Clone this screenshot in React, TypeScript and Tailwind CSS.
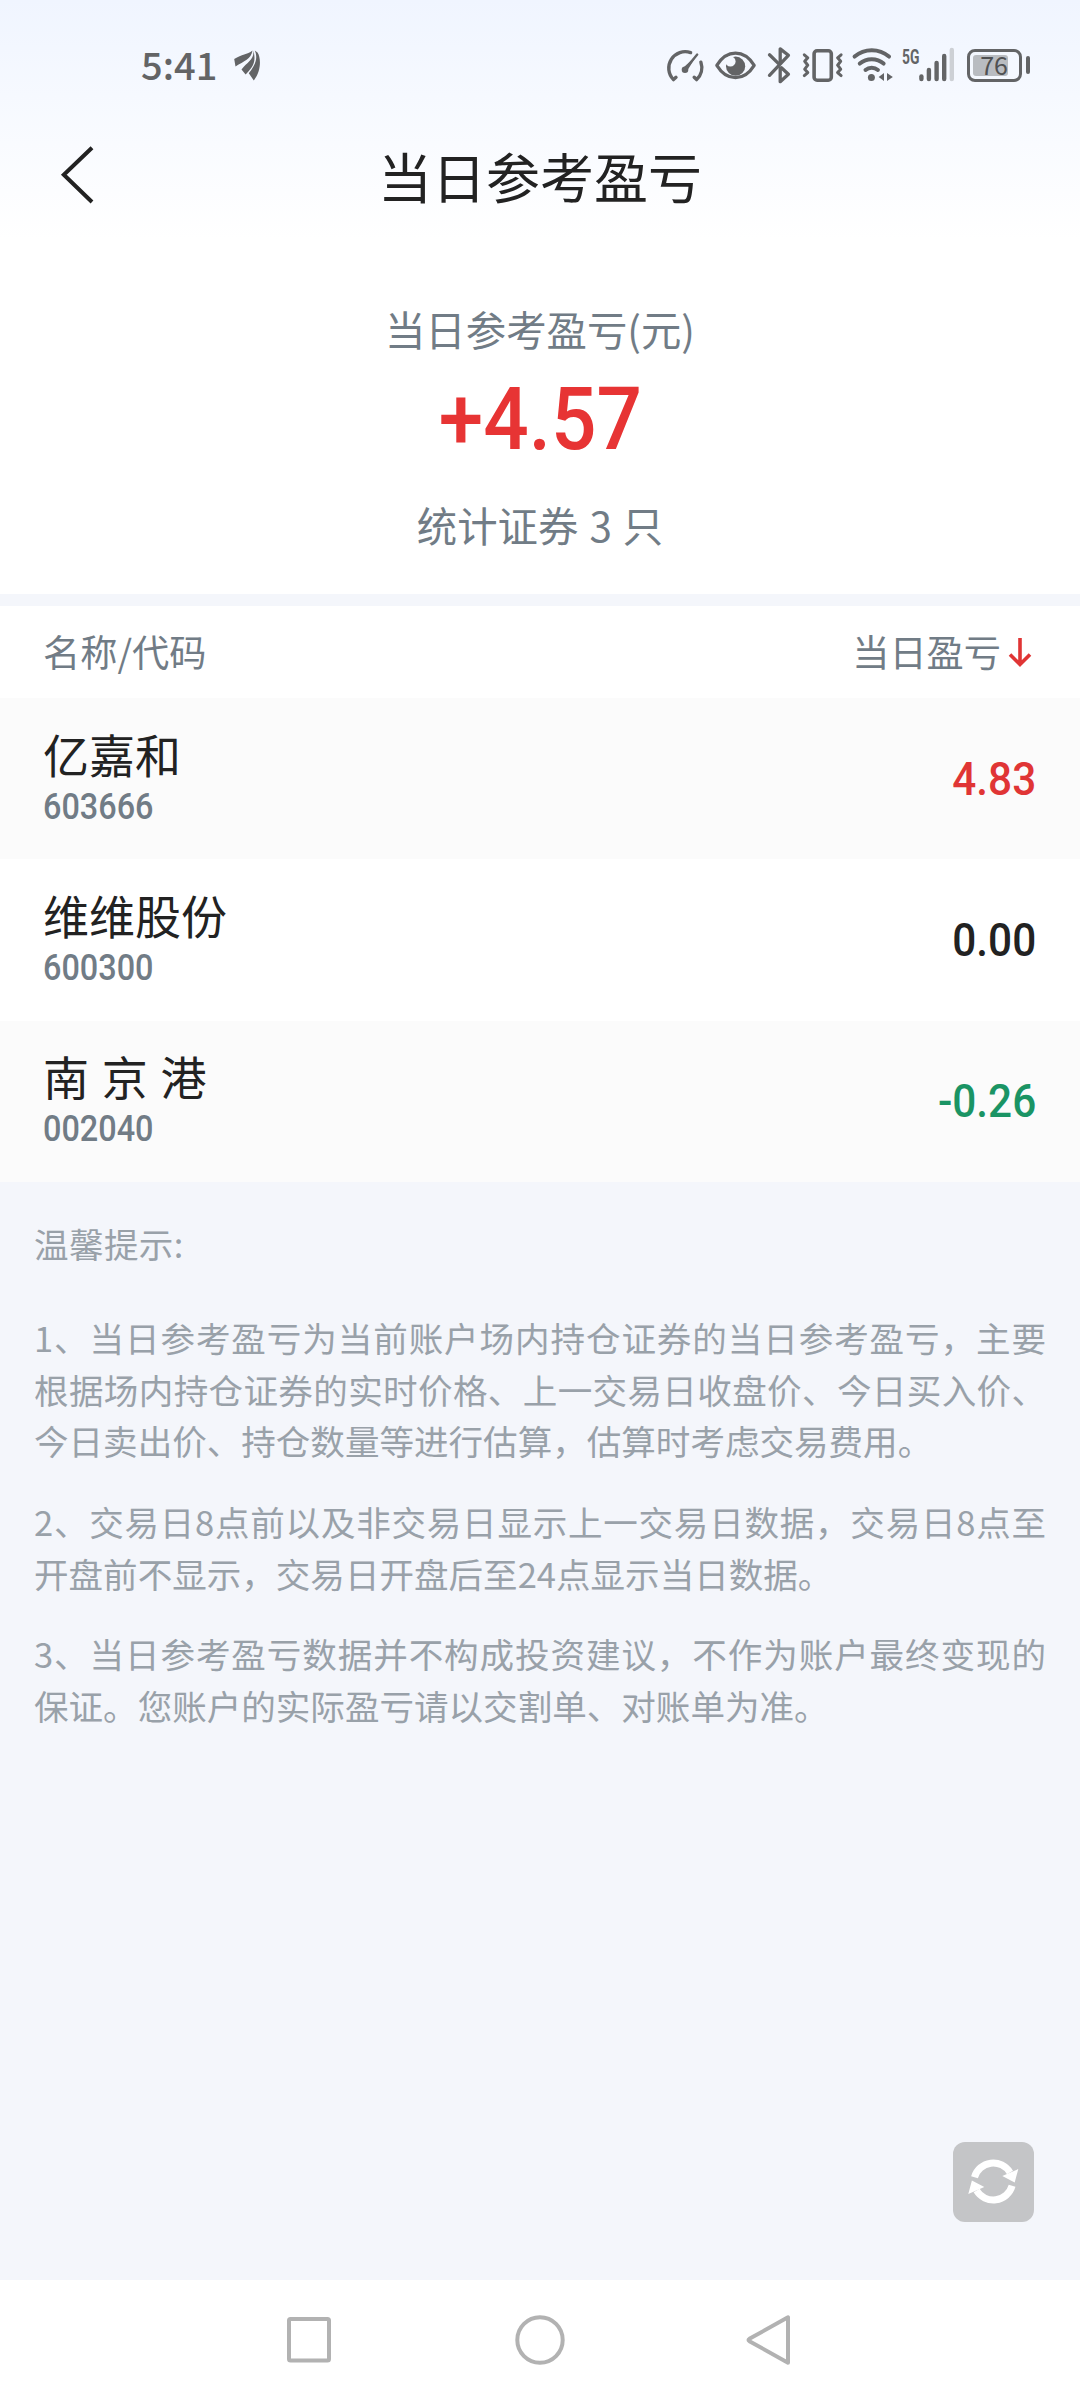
type Holding = {
  name: string;
  code: string;
  profit: string;
};

const holdings: Holding[] = [
  { name: "亿嘉和", code: "603666", profit: "4.83" },
  { name: "维维股份", code: "600300", profit: "0.00" },
  { name: "南 京 港", code: "002040", profit: "-0.26" },
];

const tips = [
  [
    "1、当日参考盈亏为当前账户场内持仓证券的当日参考盈亏，主要",
    "根据场内持仓证券的实时价格、上一交易日收盘价、今日买入价、",
    "今日卖出价、持仓数量等进行估算，估算时考虑交易费用。",
  ],
  [
    "2、交易日8点前以及非交易日显示上一交易日数据，交易日8点至",
    "开盘前不显示，交易日开盘后至24点显示当日数据。",
  ],
  [
    "3、当日参考盈亏数据并不构成投资建议，不作为账户最终变现的",
    "保证。您账户的实际盈亏请以交割单、对账单为准。",
  ],
];

const getProfitColor = (profit: string) => {
  const value = Number(profit);
  if (value > 0) return "text-[#e03535]";
  if (value < 0) return "text-[#1a9464]";
  return "text-[#222222]";
};

const GaugeIcon = () => (
  <svg width="40" height="40" viewBox="0 0 40 40" fill="none" stroke="currentColor" strokeWidth="3.4" strokeLinecap="round" strokeLinejoin="round">
    <path d="M11 32.3 8.5 34.6A16.4 16.4 0 0 1 25.6 7.6" />
    <path d="M35.9 17.2A16.4 16.4 0 0 1 31.6 34.6L29.2 32.3" />
    <path d="M32.2 9.6 20 24.5" strokeWidth="2.4" />
    <path d="M32 10 18.5 22.5 22.3 25.5Z" fill="currentColor" stroke="none" />
    <circle cx="20" cy="24.7" r="3.3" fill="currentColor" stroke="none" />
  </svg>
);

const EyeIcon = () => (
  <svg width="44" height="40" viewBox="0 0 44 40" fill="none">
    <path
      d="M2.8 20.4C8 12 14.5 8.2 21.5 8.2S35 12 40.2 20.4C35 28.9 28.5 32.7 21.5 32.7S8 28.9 2.8 20.4Z"
      stroke="currentColor"
      strokeWidth="3.2"
      strokeLinejoin="round"
    />
    <circle cx="21.6" cy="21.2" r="9.6" fill="currentColor" />
    <circle cx="16.4" cy="16.4" r="5.2" fill="#f4f8ff" />
  </svg>
);

const BluetoothIcon = () => (
  <svg width="26" height="40" viewBox="0 0 26 40" fill="none" stroke="currentColor" strokeWidth="3.3" strokeLinecap="round" strokeLinejoin="round">
    <path d="M3.5 30.3 22.4 10.3 14.2 3.9V18.6" />
    <path d="M3.5 9.8 12.3 18.4" />
    <path d="M14.2 23V36.7L22.4 29.2 15.4 22.8" />
  </svg>
);

const VibrateIcon = () => (
  <svg width="44" height="40" viewBox="0 0 44 40" fill="none" stroke="currentColor" strokeWidth="3" strokeLinecap="round" strokeLinejoin="round">
    <rect x="13.1" y="5.8" width="17.2" height="29.4" rx="3" strokeWidth="3.6" />
    <path d="M3.3 9.8 6.8 12.8 3.7 16.3 6.8 20.2 3.7 24.2 6.8 27.6 3.3 30.6" />
    <path d="M40.1 9.8 36.6 12.8 39.7 16.3 36.6 20.2 39.7 24.2 36.6 27.6 40.1 30.6" />
  </svg>
);

const WifiIcon = () => (
  <svg width="44" height="40" viewBox="0 0 44 40" fill="none" stroke="currentColor" strokeWidth="4" strokeLinecap="round">
    <path d="M3.6 11.6C13.5 3 28 3 38 11.6" />
    <path d="M8.8 18.6C15.5 12.8 26 12.8 32.6 18.6" />
    <path d="M14.5 25C18 22 23.4 22 26.9 25" />
    <circle cx="20.4" cy="32.5" r="3.5" fill="currentColor" stroke="none" />
    <path d="M27.7 32 33 28v8Z" fill="currentColor" stroke="none" />
    <path d="M41.8 32 36 28v8Z" fill="currentColor" stroke="none" />
  </svg>
);

const SignalIcon = () => (
  <svg width="38" height="40" viewBox="0 0 38 40" fill="currentColor">
    <rect x="1.2" y="29.3" width="4.4" height="7" rx="2.2" />
    <rect x="8.7" y="22.7" width="4.4" height="13.6" rx="2.2" />
    <rect x="16.4" y="15.8" width="4.4" height="20.5" rx="2.2" />
    <rect x="24" y="8.8" width="4.4" height="27.5" rx="2.2" />
    <rect x="31.6" y="2.8" width="4.4" height="33.5" rx="2.2" fill="#cdd0d5" />
  </svg>
);

const StatusBar = () => (
  <div className="flex h-[120px] items-start pt-[45px] pr-[50px] pl-[141px] text-[#636466]">
    <span className="-mt-px text-[38px] leading-[40px] font-medium">5:41</span>
    <svg className="ml-[17px]" width="30" height="40" viewBox="0 0 30 40" fill="currentColor">
      <path d="M0.2 14C8 9 13 10 18.5 5.5 17 14.5 10 16 1.5 21.4Z" />
      <path d="M19.3 5.5C20.5 14.5 13.5 16.5 7.5 24.6L11.6 29.6C17.5 23 23 18 19.3 5.5Z" />
      <path d="M20.8 5.5C24.5 14 20.5 21 14.8 28.2L19.8 35.4C27.5 26 27 12.5 23.5 7.5Z" />
    </svg>
    <div className="ml-auto flex items-center">
      <GaugeIcon />
      <div className="ml-[9px]"><EyeIcon /></div>
      <div className="ml-2"><BluetoothIcon /></div>
      <div className="ml-[9px]"><VibrateIcon /></div>
      <div className="ml-1.5"><WifiIcon /></div>
      <span className="ml-[7px] h-10 w-4">
        <span className="block origin-left scale-x-[0.66] pt-0.5 font-[Roboto] text-[21px] leading-5 font-bold">5G</span>
      </span>
      <SignalIcon />
      <div className="ml-[11px] flex h-[33px] w-[55px] items-center rounded-[8px] border-3 border-current pl-[3px]">
        <div className="flex h-[21px] w-[35px] items-center justify-end rounded-[3px] bg-[#b9bcc1] pb-0.5 text-[25px] leading-none text-[#505153]">
          76
        </div>
      </div>
      <div className="ml-1 h-[18px] w-1 rounded-full bg-current" />
    </div>
  </div>
);

const TitleBar = () => (
  <div className="grid h-[110px] grid-cols-[1fr_auto_1fr] items-center px-[60px]">
    <svg width="36" height="60" viewBox="0 0 36 60" fill="none" stroke="#222222" strokeWidth="4">
      <path d="M32 2.8 3.8 29.8 32 57" />
    </svg>
    <h1 className="pt-0.5 text-[54px] leading-[70px] text-[#222222]">当日参考盈亏</h1>
  </div>
);

const Summary = () => (
  <div className="flex flex-col items-center pt-[69px] text-[40.4px] leading-[60px] text-[#717c86]">
    <p>当日参考盈亏(元)</p>
    <p className="mt-5 scale-x-[0.92] font-[Roboto] text-[87px] leading-[80px] font-medium text-[#e73434]">+4.57</p>
    <p className="mt-9 [word-spacing:2px]">统计证券 3 只</p>
  </div>
);

const HoldingRow = ({ holding }: { holding: Holding }) => (
  <li className="flex h-[161.4px] items-center justify-between bg-white pr-11 pb-[7px] pl-[43px] odd:bg-[#fbfbfb]">
    <div>
      <p className="text-[46px] leading-[60px] text-[#222222] [word-spacing:2.5px]">{holding.name}</p>
      <p className="mt-[3px] origin-left scale-x-[0.9] font-[Roboto] text-[36px] leading-[42px] font-medium text-[#717c86]">
        {holding.code}
      </p>
    </div>
    <span className={`origin-right scale-x-[0.9] pt-[7px] font-[Roboto] text-[47px] leading-[60px] font-medium ${getProfitColor(holding.profit)}`}>
      {holding.profit}
    </span>
  </li>
);

const Tips = () => (
  <section className="px-[34px] pt-9 text-[34.56px] leading-[51.7px] text-[#99a1a9]">
    <p className="tracking-[0.4px]">温馨提示:</p>
    {tips.map((lines, i) => (
      <p key={i} className={i === 0 ? "mt-[42px]" : "mt-[29px]"}>
        {lines.map((line, j) => (
          <span
            key={line}
            className={`block whitespace-nowrap ${j < lines.length - 1 ? "text-justify [text-align-last:justify]" : ""}`}
          >
            {line}
          </span>
        ))}
      </p>
    ))}
  </section>
);

const NavigationBar = () => (
  <nav className="mt-auto flex h-[120px] items-center bg-white pl-[284px]">
    <svg width="50" height="56" viewBox="0 0 50 56" fill="none" stroke="#b2b2b2" strokeWidth="4">
      <rect x="5" y="7" width="40" height="41.5" rx="1.5" />
    </svg>
    <svg className="ml-[178px]" width="56" height="56" viewBox="0 0 56 56" fill="none" stroke="#b2b2b2" strokeWidth="4">
      <circle cx="28" cy="28" r="22.7" />
    </svg>
    <svg className="ml-[176px]" width="50" height="56" viewBox="0 0 50 56" fill="none" stroke="#b2b2b2" strokeWidth="4" strokeLinejoin="round">
      <path d="M44 5.3V50.7L5.4 29.2Q3.6 28 5.4 26.8Z" />
    </svg>
  </nav>
);

const App = () => {
  return (
    <div className="relative flex h-[2400px] w-[1080px] flex-col overflow-hidden bg-[#f4f6fb] font-['Noto_Sans_CJK_SC',sans-serif]">
      <header className="h-[594px] bg-linear-to-b from-[#f0f5ff] to-white to-[240px]">
        <StatusBar />
        <TitleBar />
        <Summary />
      </header>

      <main className="mt-3">
        <div className="flex h-[92px] items-center justify-between bg-white pr-[45px] pb-[3px] pl-[43px] text-[37.2px] leading-[56px] text-[#717c86]">
          <span>名称/代码</span>
          <span className="flex items-center">
            当日盈亏
            <svg className="mt-0.5 mr-0.5 ml-1.5" width="26" height="36" viewBox="0 0 26 36" fill="none" stroke="#e03535" strokeWidth="3.6">
              <path d="M13 4V31M3 20.5 13 30.5 23 20.5" />
            </svg>
          </span>
        </div>
        <ul>
          {holdings.map((holding) => (
            <HoldingRow key={holding.code} holding={holding} />
          ))}
        </ul>
        <Tips />
      </main>

      <button className="absolute top-[2142px] left-[953px] h-20 w-[81px] rounded-[12px] bg-[#c4c5c7]">
        <svg width="81" height="80" viewBox="0 0 81 80" fill="none" stroke="white" strokeWidth="7">
          <path d="M21.5 35.2A19.5 19.5 0 0 1 57 30.5" />
          <path d="M59.1 43.8A19.5 19.5 0 0 1 23.6 48.5" />
          <path d="M65.3 27 49.3 34 61.7 40.5ZM15.3 52 31.3 45 18.9 38.5Z" fill="white" stroke="none" />
        </svg>
      </button>

      <NavigationBar />
    </div>
  );
};

export default App;
